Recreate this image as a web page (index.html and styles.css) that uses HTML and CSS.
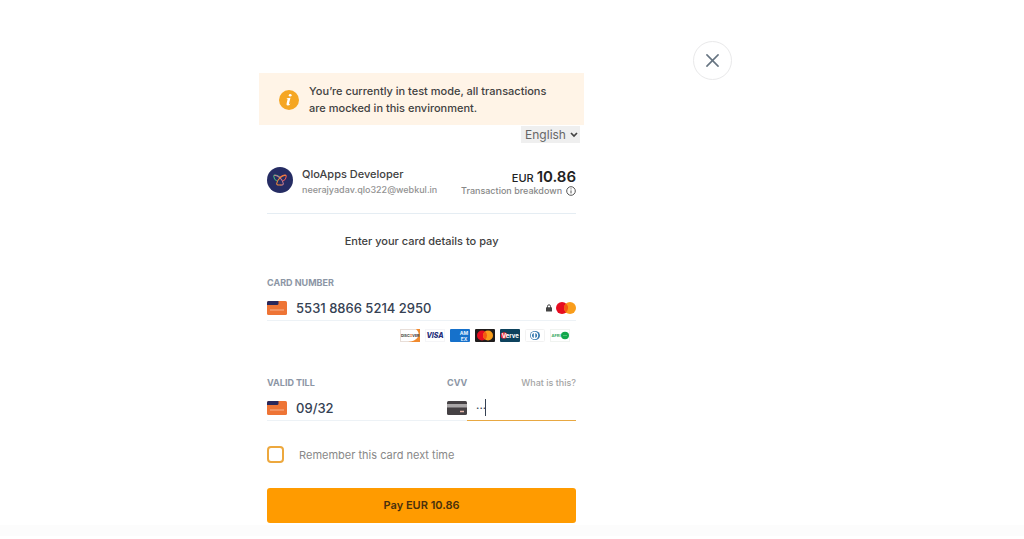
FILE: index.html
```html
<!DOCTYPE html>
<html lang="en">
<head>
<meta charset="utf-8">
<meta name="viewport" content="width=device-width, initial-scale=1">
<title>Card payment</title>
<link rel="stylesheet" href="styles.css">
</head>
<body>
<div class="stage">
  <main class="checkout">
    <div class="notice" role="status">
      <svg class="notice-icon" viewBox="0 0 20 20" aria-hidden="true"><circle cx="10" cy="10" r="10" fill="#f5a623"/><ellipse cx="11.200" cy="5.200" rx="1.400" ry="1.300" fill="#fff"/><path d="M8 8.200l3.500-.4-1.500 5.700q-.2 1 1.600-.1-1.300 2.200-3 2.200-1.500-.1-1-2l1-4.500-1-.1z" fill="#fff"/></svg>
      <p>You’re currently in test mode, all transactions are mocked in this environment.</p>
    </div>
    <div class="language">
      <label class="hidden" for="lang">Language</label>
      <select id="lang"><option>English</option></select>
      <svg viewBox="0 0 8 6" aria-hidden="true"><path d="M1 1l3 3 3-3" fill="none" stroke="#444" stroke-width="1.7"/></svg>
    </div>
    <form class="body">
      <header class="merchant">
        <svg class="avatar" viewBox="0 0 26 26" aria-hidden="true"><circle cx="13" cy="13" r="13" fill="#252c63"/><g fill="none" stroke-width="1.1" stroke-linecap="round"><path d="M12.500 10C10 7.500 6.500 7.200 6.800 9.500c.2 2.200 1.200 3.500 2.700 4.200" stroke="#45b67a"/><path d="M13.500 10C16 7.500 19.500 7.200 19.200 9.500c-.2 2.200-1.200 3.500-2.700 4.200" stroke="#ee5b55"/><path d="M7.500 8.200c4 .3 8 4.300 8.800 8.300.1 1.300-.8 1.500-2.300 1.500" stroke="#c47b94"/><path d="M18.500 8.200c-4 .3-8 4.300-8.800 8.300-.1 1.300.8 1.500 2.300 1.500h2" stroke="#f28b3b"/></g></svg>
        <div class="who"><h1>QloApps Developer</h1><p>neerajyadav.qlo322@webkul.in</p></div>
        <div class="total">
          <p class="amount">EUR <strong>10.86</strong></p>
          <p class="breakdown">Transaction breakdown <svg viewBox="0 0 10 10" aria-hidden="true"><circle cx="5" cy="5" r="4.300" fill="none" stroke="#555"/><path d="M5 4.400v3M5 2.400v1" stroke="#555"/></svg></p>
        </div>
      </header>
      <h2>Enter your card details to pay</h2>
      <div class="field">
        <label for="number">CARD NUMBER</label>
        <div class="control">
          <svg class="card" viewBox="0 0 20 14" aria-hidden="true"><rect width="20" height="14" rx="1.500" fill="#ee7435"/><path d="M0 4V1.500Q0 0 1.500 0H11.500V2.500Q11.500 4 10 4z" fill="#29285c"/><path d="M3 9h14" stroke="#f7b28f"/></svg>
          <input id="number" value="5531 8866 5214 2950">
          <svg class="lock" viewBox="0 0 6 8" aria-hidden="true"><path d="M1.500 4V2.300a1.500 1.500 0 0 1 3 0V4" fill="none" stroke="#444"/><rect y="3.300" width="6" height="4.200" rx=".5" fill="#444"/></svg>
          <svg class="brand" viewBox="0 0 20 12" aria-hidden="true"><circle cx="6" cy="6" r="6" fill="#e60c20"/><circle cx="14" cy="6" r="6" fill="#f99d1b"/><path d="M10 1.500a6 6 0 0 1 0 9 6 6 0 0 1 0-9" fill="#f45a12"/></svg>
        </div>
      </div>
      <div class="networks">
        <svg viewBox="0 0 20 13" role="img" aria-label="Discover"><rect x=".5" y=".5" width="19" height="12" fill="#fff" stroke="#e8ded8"/><path d="M16 0h4v13H8q7-.5 10-5 2-4-2-8" fill="#f18a2e"/><path d="M1 1h14.500q3.500 3 1.500 6-4 5-10 5H1z" fill="#fff"/><text x="1" y="8" font-size="3.600" font-weight="700" fill="#333">DISC<tspan fill="#e8762c">O</tspan>VER</text></svg>
        <svg viewBox="0 0 20 13" role="img" aria-label="Visa"><rect x=".5" y=".5" width="19" height="12" fill="#fff" stroke="#f5f5f7"/><text x="10" y="9" text-anchor="middle" font-size="7" font-weight="800" font-style="italic" fill="#26307b">VISA</text></svg>
        <svg viewBox="0 0 20 13" role="img" aria-label="American Express"><rect width="20" height="13" rx="1" fill="#1671cb"/><text x="14" y="5.500" text-anchor="middle" font-size="5" font-weight="700" fill="#e6f3ff">AM</text><text x="14" y="11.500" text-anchor="middle" font-size="5" font-weight="700" fill="#e6f3ff">EX</text></svg>
        <svg viewBox="0 0 20 13" role="img" aria-label="Mastercard"><rect width="20" height="13" rx="1" fill="#1f1c1c"/><circle cx="7" cy="6.500" r="5" fill="#e60c20"/><circle cx="13" cy="6.500" r="5" fill="#f99d1b"/><path d="M10 2.500a5 5 0 0 1 0 8 5 5 0 0 1 0-8" fill="#f45a12"/></svg>
        <svg viewBox="0 0 20 13" role="img" aria-label="Verve"><rect width="20" height="13" rx="1" fill="#0d425d"/><circle cx="4" cy="6.500" r="3.200" fill="#e62e37"/><text x="10.300" y="8.700" text-anchor="middle" font-size="6" font-weight="700" fill="#fff">Verve</text></svg>
        <svg viewBox="0 0 20 13" role="img" aria-label="Diners Club"><rect x=".5" y=".5" width="19" height="12" rx="1" fill="#fff" stroke="#f2f2f2"/><ellipse cx="10" cy="6.500" rx="5" ry="4.500" fill="#3478ae"/><circle cx="9.500" cy="6.500" r="3.700" fill="#fff"/><path d="M8.800 4a2.600 2.600 0 0 0 0 5zM10.300 4a2.600 2.600 0 0 1 0 5z" fill="#3478ae"/></svg>
        <svg viewBox="0 0 20 13" role="img" aria-label="Afrigo"><rect x=".5" y=".5" width="19" height="12" fill="#fff" stroke="#f0f3f0"/><text x="1.500" y="7.800" font-size="4" font-weight="700" fill="#35a865">AFRI</text><ellipse cx="15" cy="6.500" rx="4" ry="3.700" fill="#11a64b"/><path d="M13 6.500h4" stroke="#4dc275"/></svg>
      </div>
      <div class="row">
        <div class="field">
          <label for="expiry">VALID TILL</label>
          <div class="control">
            <svg class="card" viewBox="0 0 20 14" aria-hidden="true"><rect width="20" height="14" rx="1.500" fill="#ee7435"/><path d="M0 4V1.500Q0 0 1.500 0H11.500V2.500Q11.500 4 10 4z" fill="#29285c"/><path d="M3 9h14" stroke="#f7b28f"/></svg>
            <input id="expiry" value="09/32">
          </div>
        </div>
        <div class="field">
          <div class="labels"><label for="cvv">CVV</label><a href="#cvv">What is this?</a></div>
          <div class="control cvv">
            <svg class="card" viewBox="0 0 20 14" aria-hidden="true"><rect width="20" height="14" rx="1.500" fill="#454144"/><path d="M0 3h20v3.500H0z" fill="#aaa7a8"/><path d="M13 10.500h4" stroke="#e8b9ad" stroke-width="1.500"/></svg>
            <div class="secret"><input id="cvv" value="···"><span class="caret"></span></div>
          </div>
        </div>
      </div>
      <div class="remember"><input type="checkbox" id="save"><label for="save">Remember this card next time</label></div>
      <button class="pay" type="button">Pay EUR 10.86</button>
    </form>
  </main>
  <button class="close" type="button" aria-label="Close"><svg viewBox="0 0 14 14" aria-hidden="true"><path d="M1 1l12 12M13 1L1 13" stroke="#667481" stroke-width="1.700" stroke-linecap="round"/></svg></button>
</div>
<footer class="strip"></footer>
</body>
</html>
```
FILE: styles.css
```css
* { box-sizing: border-box; }
body { margin: 0; background: #fff; color: #414141; font-family: Inter, "Liberation Sans", sans-serif; font-size: 11px; line-height: 16px; }
h1, h2, p { margin: 0; font-weight: 500; }
svg { display: block; flex: none; }
input, select, button { font: inherit; color: inherit; }
.stage { display: flex; align-items: flex-start; justify-content: flex-start; gap: 109px; padding: 41px 16px 2px 25.3%; }
.checkout { flex: 0 1 325px; min-width: 0; padding-top: 32px; }
.notice { display: flex; align-items: center; gap: 10px; padding: 10px 32px 8px 20px; background: #fff4e7; line-height: 17px; }
.notice-icon { width: 20px; height: 20px; }
.language { position: relative; width: fit-content; margin: 1px 4px 0 auto; }
.language select { display: block; appearance: none; width: 59px; height: 17px; padding: 0 8px 0 4px; border: 0; background: #efefef; color: #666; font-size: 12px; line-height: normal; }
.language svg { position: absolute; right: 2px; top: 6px; width: 8px; height: 6px; pointer-events: none; }
.hidden { position: absolute; width: 1px; height: 1px; overflow: hidden; clip-path: inset(50%); }
.body { padding: 22px 8px 0; }
.merchant { display: flex; align-items: flex-start; gap: 9px; padding-bottom: 15px; border-bottom: 1px solid #e5edf3; }
.avatar { width: 26px; height: 26px; margin-top: 2px; }
.who { flex: 1; min-width: 0; padding-top: 1px; }
h1 { font-size: 11px; line-height: 16px; }
.who p { color: #929292; font-size: 9px; line-height: 16px; }
.total { padding-top: 4px; text-align: right; color: #222; }
.amount { font-size: 11px; line-height: 16px; white-space: nowrap; }
.amount strong { font-size: 15px; font-weight: 600; }
.breakdown { display: flex; align-items: center; justify-content: flex-end; gap: 4px; color: #888; font-size: 9px; line-height: 10px; white-space: nowrap; }
.breakdown svg { width: 10px; height: 10px; }
h2 { margin: 19px 0 26px; font-size: 11px; line-height: 16px; text-align: center; }
.field { min-width: 0; }
.field label { display: block; color: #8c96a5; font-size: 9px; line-height: 16px; font-weight: 700; }
.control { display: flex; align-items: center; gap: 9px; height: 30px; padding-top: 4px; border-bottom: 1px solid #edf2f6; }
.control input { flex: 1; width: 0; min-width: 0; padding: 0; border: 0; outline: 0; background: none; color: #354153; font-size: 13px; line-height: 20px; font-weight: 500; }
.card { width: 20px; height: 14px; }
.lock { width: 6px; height: 8px; }
.brand { width: 20px; height: 12px; }
.control .lock + .brand { margin-left: -5px; }
.networks { display: flex; justify-content: flex-end; gap: 5px; padding: 8px 6px 33px 0; }
.networks svg { width: 20px; height: 13px; }
.row { display: grid; grid-template-columns: 180fr 129fr; }
.labels { display: flex; justify-content: space-between; }
.labels a { color: #a4a4a4; font-size: 9px; font-weight: 500; line-height: 16px; text-decoration: none; }
.cvv { gap: 0; }
.secret { flex: 1; align-self: stretch; display: flex; align-items: center; margin-bottom: -1px; padding-left: 9px; border-bottom: 1px solid #e8a842; }
.control .secret input { flex: none; width: 9px; font-size: 11px; }
.caret { width: 1px; height: 17px; background: #354153; }
.remember { display: flex; align-items: center; gap: 15px; margin-top: 25px; color: #888; }
.remember input { appearance: none; width: 17px; height: 17px; margin: 0; border: 2px solid #eda83d; border-radius: 4px; background: #fff; }
.pay { display: block; width: 100%; margin-top: 25px; padding: 9px; border: 0; border-radius: 3px; background: #ff9b00; color: #49300d; font-size: 11px; line-height: 17px; font-weight: 600; }
.close { flex: none; display: grid; place-items: center; width: 39px; height: 39px; padding: 0; border: 1px solid #e9e9ea; border-radius: 50%; background: #fff; }
.close svg { width: 13px; height: 13px; }
.strip { height: 11px; background: #fcfcfc; }
```
